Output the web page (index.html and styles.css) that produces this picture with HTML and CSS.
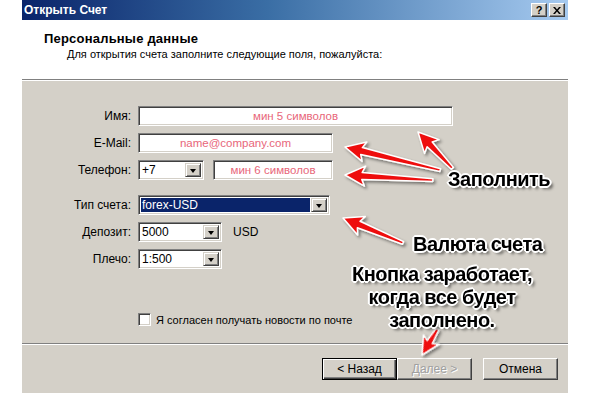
FILE: index.html
```html
<!DOCTYPE html>
<html lang="ru">
<head>
    <meta charset="UTF-8">
    <title>Открыть Счет</title>
    <link rel="stylesheet" href="styles.css">
</head>
<body>

    <div class="window">
        <div class="titlebar">
            <span class="title">Открыть Счет</span>
            <div class="tb-buttons">
                <span class="tb-btn">?</span>
                <span class="tb-btn">
                    <svg width="8" height="7" viewBox="0 0 8 7"><path d="M0 0h2l2 2.5L6 0h2L5 3.5 8 7H6L4 4.5 2 7H0l3-3.5z" fill="#000"/></svg>
                </span>
            </div>
        </div>

        <div class="header">
            <h1>Персональные данные</h1>
            <p>Для открытия счета заполните следующие поля, пожалуйста:</p>
        </div>

        <div class="body">
            <div class="form">
                <div class="row">
                    <label>Имя:</label>
                    <div class="field w-name">мин 5 символов</div>
                </div>
                <div class="row">
                    <label>E-Mail:</label>
                    <div class="field w-mail">name@company.com</div>
                </div>
                <div class="row">
                    <label>Телефон:</label>
                    <div class="combo w-code"><span class="value">+7</span><span class="drop"></span></div>
                    <div class="field w-phone">мин 6 символов</div>
                </div>
                <div class="row row-space">
                    <label>Тип счета:</label>
                    <div class="combo w-type"><span class="value selected">forex-USD</span><span class="drop"></span></div>
                </div>
                <div class="row">
                    <label>Депозит:</label>
                    <div class="combo w-small"><span class="value">5000</span><span class="drop"></span></div>
                    <span class="unit">USD</span>
                </div>
                <div class="row">
                    <label>Плечо:</label>
                    <div class="combo w-small"><span class="value">1:500</span><span class="drop"></span></div>
                </div>
            </div>

            <div class="agree">
                <span class="checkbox"></span>
                <span>Я согласен получать новости по почте</span>
            </div>

            <div class="separator"></div>

            <div class="footer">
                <span class="btn btn-default">&lt; Назад</span>
                <span class="btn btn-disabled">Далее &gt;</span>
                <span class="btn btn-cancel">Отмена</span>
            </div>
        </div>
    </div>

    <!-- annotations drawn over the dialog -->
    <svg class="arrows" width="591" height="393" viewBox="0 0 591 393">
        <defs>
            <filter id="shadow" x="-30%" y="-30%" width="160%" height="160%">
                <feDropShadow dx="2" dy="2" stdDeviation="1.5" flood-color="#000" flood-opacity="0.45"/>
            </filter>
        </defs>
        <g fill="#ee1111" stroke="#fff" stroke-width="1.5" stroke-linejoin="round" filter="url(#shadow)">
            <path transform="translate(418 132) rotate(46.6)" d="M0 0L20 -10L17 -3.5L50 -1.4L50 1.4L17 3.5L20 10Z"/>
            <path transform="translate(345 147) rotate(13.6)" d="M0 0L20 -10L17 -3.5L98 -1.4L98 1.4L17 3.5L20 10Z"/>
            <path transform="translate(345 175) rotate(3.3)" d="M0 0L20 -10L17 -3.5L88 -1.4L88 1.4L17 3.5L20 10Z"/>
            <path transform="translate(343 218) rotate(22.6)" d="M0 0L20 -10L17 -3.5L65 -1.4L65 1.4L17 3.5L20 10Z"/>
            <path transform="translate(422 355) rotate(-59)" d="M0 0L18 -9L15 -3L30 -1.5L30 1.5L15 3L18 9Z"/>
        </g>
    </svg>

    <div class="note note-fill">Заполнить</div>
    <div class="note note-currency">Валюта счета</div>
    <div class="note note-button">Кнопка заработает,<br>когда все будет<br>заполнено.</div>

</body>
</html>
```

FILE: styles.css
```css
* {
    margin: 0;
    padding: 0;
    box-sizing: border-box;
}

body {
    font-family: 'Liberation Sans', Arial, sans-serif;
    font-size: 11px;
    background-color: #ffffff;
    color: #000;
    width: 591px;
    height: 393px;
    overflow: hidden;
    position: relative;
}

.window {
    margin-left: 22px;
    width: 546px;
    height: 393px;
    background-color: #d4d0c8;
    display: flex;
    flex-direction: column;
}

/* title bar */
.titlebar {
    height: 20px;
    background: linear-gradient(to right, #0a246a, #3a6ea5 45%, #a6caf0);
    display: flex;
    align-items: center;
    justify-content: space-between;
    padding: 0 3px 0 2px;
}

.title {
    color: #fff;
    font-weight: bold;
    font-size: 12px;
}

.tb-buttons {
    display: flex;
    gap: 2px;
}

.tb-btn {
    width: 16px;
    height: 14px;
    background-color: #d4d0c8;
    border: 1px solid;
    border-color: #fff #404040 #404040 #fff;
    box-shadow: inset -1px -1px #808080;
    display: flex;
    align-items: center;
    justify-content: center;
    font-weight: bold;
    font-size: 11px;
    line-height: 1;
}

/* white header */
.header {
    height: 60px;
    background-color: #fff;
    border-bottom: 1px solid #808080;
    padding: 12px 0 0 22px;
}

.header h1 {
    font-size: 13px;
    font-weight: bold;
    letter-spacing: 0.2px;
    line-height: 14px;
}

.header p {
    margin: 2px 0 0 23px;
    line-height: 13px;
}

.body {
    flex: 1;
    border-top: 1px solid #fff;
    display: flex;
    flex-direction: column;
}

/* form */
.form {
    padding-top: 25px;
    display: flex;
    flex-direction: column;
    gap: 7px;
}

.row {
    display: flex;
    align-items: center;
    height: 20px;
}

.row-space {
    margin-top: 8px;
}

.row label {
    width: 109px;
    margin-right: 7px;
    text-align: right;
    font-size: 12px;
}

.field,
.combo {
    height: 20px;
    background-color: #fff;
    border: 1px solid;
    border-color: #808080 #fff #fff #808080;
    box-shadow: inset 1px 1px #404040, inset -1px -1px #d4d0c8;
}

.field {
    color: #e8667a;
    text-align: center;
    line-height: 18px;
    font-size: 11.5px;
}

.combo {
    display: flex;
    align-items: stretch;
    padding: 2px;
}

.combo .value {
    flex: 1;
    line-height: 14px;
    padding-left: 1px;
    font-size: 12px;
}

.combo .value.selected {
    background-color: #0a246a;
    color: #fff;
    margin-right: 1px;
}

.drop {
    width: 16px;
    background-color: #d4d0c8;
    border: 1px solid;
    border-color: #d4d0c8 #404040 #404040 #d4d0c8;
    box-shadow: inset 1px 1px #fff, inset -1px -1px #808080;
    position: relative;
}

.drop::after {
    content: '';
    position: absolute;
    left: 4px;
    top: 5px;
    border-left: 3.5px solid transparent;
    border-right: 3.5px solid transparent;
    border-top: 4px solid #000;
}

.w-name { width: 315px; }
.w-mail { width: 195px; }
.w-code { width: 66px; margin-right: 9px; }
.w-phone { width: 120px; }
.w-type { width: 192px; }
.w-small { width: 84px; }

.unit {
    margin-left: 11px;
    font-size: 12px;
}

/* checkbox */
.agree {
    display: flex;
    align-items: center;
    gap: 5px;
    margin: 44px 0 0 116px;
    height: 13px;
}

.checkbox {
    width: 13px;
    height: 13px;
    background-color: #fff;
    border: 1px solid;
    border-color: #808080 #fff #fff #808080;
    box-shadow: inset 1px 1px #404040, inset -1px -1px #d4d0c8;
}

.separator {
    margin-top: 17px;
    border-top: 1px solid #808080;
    border-bottom: 1px solid #fff;
}

/* buttons */
.footer {
    display: flex;
    justify-content: flex-end;
    padding: 13px 10px 0 0;
}

.btn {
    width: 75px;
    height: 22px;
    display: flex;
    align-items: center;
    justify-content: center;
    font-size: 12px;
    border: 1px solid;
    border-color: #fff #404040 #404040 #fff;
    box-shadow: inset -1px -1px #808080;
}

.btn-default {
    border: 1px solid #000;
    box-shadow: inset 1px 1px #fff, inset -1px -1px #404040, inset -2px -2px #808080;
}

.btn-disabled {
    color: #a0a0a0;
    text-shadow: 1px 1px #fff;
}

.btn-cancel {
    margin-left: 11px;
}

/* annotations */
.arrows {
    position: absolute;
    left: 0;
    top: 0;
    pointer-events: none;
}

.note {
    position: absolute;
    font-family: 'Liberation Sans', Arial, sans-serif;
    font-weight: bold;
    font-size: 20px;
    letter-spacing: -0.5px;
    line-height: 23px;
    color: #000;
    text-align: center;
    white-space: nowrap;
    text-shadow: -1px -1px 0 #fff, 1px -1px 0 #fff, -1px 1px 0 #fff, 1px 1px 0 #fff,
        0 -2px 0 #fff, 0 2px 0 #fff, -2px 0 0 #fff, 2px 0 0 #fff,
        3px 3px 3px rgba(0, 0, 0, 0.6);
}

.note-fill {
    left: 448px;
    top: 168px;
}

.note-currency {
    left: 413px;
    top: 233px;
}

.note-button {
    left: 349px;
    top: 263px;
    width: 186px;
}
```
